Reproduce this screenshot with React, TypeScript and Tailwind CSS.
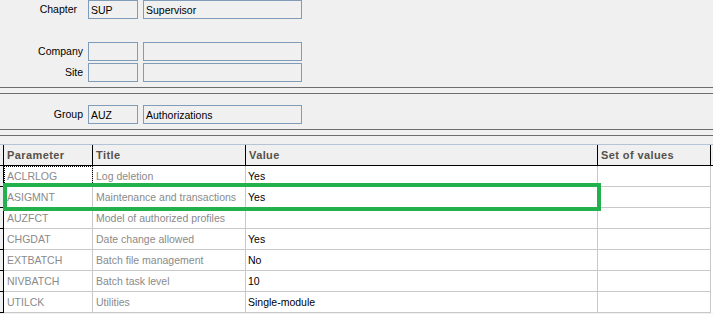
const rows = [
  { param: "ACLRLOG", title: "Log deletion", value: "Yes" },
  { param: "ASIGMNT", title: "Maintenance and transactions", value: "Yes" },
  { param: "AUZFCT", title: "Model of authorized profiles", value: "" },
  { param: "CHGDAT", title: "Date change allowed", value: "Yes" },
  { param: "EXTBATCH", title: "Batch file management", value: "No" },
  { param: "NIVBATCH", title: "Batch task level", value: "10" },
  { param: "UTILCK", title: "Utilities", value: "Single-module" },
]

function Field({ w, text }: { w: string; text?: string }) {
  return (
    <div className={`${w} h-[19px] border border-[#7f9db9] bg-[#f0f0f0] pl-[2px] leading-[18px] text-black`}>
      {text}
    </div>
  )
}

function App(): React.ReactElement {
  return (
    <div
      className="relative h-[314px] w-[713px] overflow-hidden bg-[#f0f0f0] text-[10.5px] text-black"
      style={{ fontFamily: '"Liberation Sans", Arial, sans-serif' }}
    >
      {/* form header */}
      <div className="flex h-[19px] items-center">
        <div className="w-[77px] text-right">Chapter</div>
        <div className="ml-[11px] flex gap-[5px]">
          <Field w="w-[50px]" text="SUP" />
          <Field w="w-[159px]" text="Supervisor" />
        </div>
      </div>
      <div className="mt-[23px] flex h-[19px] items-center">
        <div className="w-[83px] text-right">Company</div>
        <div className="ml-[5px] flex gap-[5px]">
          <Field w="w-[50px]" />
          <Field w="w-[159px]" />
        </div>
      </div>
      <div className="mt-[2px] flex h-[19px] items-center">
        <div className="w-[83px] text-right">Site</div>
        <div className="ml-[5px] flex gap-[5px]">
          <Field w="w-[50px]" />
          <Field w="w-[159px]" />
        </div>
      </div>
      <div className="mt-[5px] h-px bg-[#6d6d6d]" />
      <div className="mt-[5px] h-px bg-[#6d6d6d]" />
      <div className="mt-[11px] flex h-[19px] items-center">
        <div className="w-[83px] text-right">Group</div>
        <div className="ml-[5px] flex gap-[5px]">
          <Field w="w-[50px]" text="AUZ" />
          <Field w="w-[159px]" text="Authorizations" />
        </div>
      </div>
      <div className="mt-[5px] h-px bg-[#6d6d6d]" />
      <div className="mt-[5px] h-px bg-[#6d6d6d]" />

      {/* grid */}
      <div className="mt-[8px] h-px bg-[#b4c4d4]" />
      <div className="bg-white">
        <div className="flex h-[21px] border-b border-black bg-[#f0f0f0] text-[11px] font-bold tracking-[0.4px] text-[#56504a]">
          <div className="w-[4px] border-r border-black" />
          <div className="w-[89px] border-r border-black pl-[3px] leading-[20px]">Parameter</div>
          <div className="w-[153px] border-r border-black pl-[3px] leading-[20px]">Title</div>
          <div className="w-[352px] border-r border-black pl-[3px] leading-[20px]">Value</div>
          <div className="w-[113px] border-r border-black pl-[3px] leading-[20px]">Set of values</div>
          <div className="flex-1" />
        </div>
        {rows.map((r, i) => (
          <div key={r.param} className="flex h-[21px]">
            <div className="w-[4px] border-r border-b border-black bg-[#f0f0f0]" />
            <div
              className={`w-[89px] border-r border-b border-[#c8c8c8] pl-[3px] leading-[21px] text-[#8a8a8a] ${
                i === 0 ? "outline-1 outline-dotted -outline-offset-1 outline-black" : ""
              }`}
            >
              {r.param}
            </div>
            <div className="w-[153px] border-r border-b border-[#c8c8c8] pl-[3px] leading-[21px] text-[#8a8a8a]">
              {r.title}
            </div>
            <div className="w-[352px] border-r border-b border-[#c8c8c8] pl-[2px] leading-[21px] text-black">
              {r.value}
            </div>
            <div className="w-[113px] border-r border-b border-[#c8c8c8]" />
            <div className="flex-1" />
          </div>
        ))}
      </div>

      {/* highlight annotation */}
      <div className="absolute left-[3px] top-[183px] h-[28px] w-[598px] border-4 border-[#22b14c]" />
    </div>
  )
}

export default App
